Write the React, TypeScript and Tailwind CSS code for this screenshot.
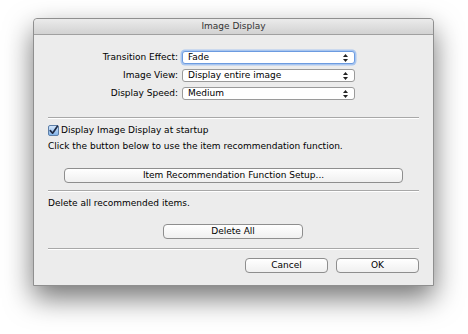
import React from 'react';

const font = { fontFamily: '"DejaVu Sans", "Liberation Sans", sans-serif' };

const Arrows: React.FC = () => (
  <svg width="5" height="8" viewBox="0 0 5 8" className="shrink-0">
    <path d="M2.5 0 L5 3 L0 3 Z" fill="#222" />
    <path d="M2.5 8 L5 5 L0 5 Z" fill="#222" />
  </svg>
);

const Select: React.FC<{ value: string; focused?: boolean }> = ({ value, focused }) => (
  <div
    className={`w-[173px] h-[13px] flex items-center justify-between pl-[5px] pr-[6px] bg-white rounded-[3px] border ${
      focused ? 'border-[#6c9be0] shadow-[0_0_0_1.5px_#a9c6ef]' : 'border-[#9a9a9a]'
    }`}
  >
    <span className="text-[9px] leading-none text-black">{value}</span>
    <Arrows />
  </div>
);

const Button: React.FC<{ label: string; className: string }> = ({ label, className }) => (
  <div
    className={`h-[15px] flex items-center justify-center rounded-[4px] border border-[#8e8e8e] bg-gradient-to-b from-white to-[#f0f0f0] text-[9px] leading-none text-black ${className}`}
  >
    {label}
  </div>
);

const Separator: React.FC<{ className: string }> = ({ className }) => (
  <div className={`h-px bg-[#a8a8a8] border-b border-white box-content ${className}`} />
);

const Checkbox: React.FC = () => (
  <svg width="11" height="11" viewBox="0 0 11 11" className="shrink-0">
    <defs>
      <linearGradient id="cb" x1="0" y1="0" x2="0" y2="1">
        <stop offset="0" stopColor="#d7e8fb" />
        <stop offset="1" stopColor="#7fb2ea" />
      </linearGradient>
    </defs>
    <rect x="0.5" y="0.5" width="10" height="10" rx="1.5" fill="url(#cb)" stroke="#5d7fa8" />
    <path d="M2.3 5.6 L4.6 8.2 L9.4 1.2" fill="none" stroke="#1e2a44" strokeWidth="1.7" strokeLinecap="round" strokeLinejoin="round" />
  </svg>
);

const rows = [
  { label: 'Transition Effect:', value: 'Fade', focused: true },
  { label: 'Image View:', value: 'Display entire image' },
  { label: 'Display Speed:', value: 'Medium' },
];

export default function App() {
  return (
    <div className="w-[468px] h-[334px] bg-white pt-[18px] pl-[33px] overflow-hidden" style={font}>
      <div className="w-[401px] h-[268px] flex flex-col bg-[#ececec] border border-[#8f8f8f] rounded-t-[4px] shadow-[0_12px_28px_rgba(0,0,0,0.55)]">
        {/* Title bar */}
        <div className="h-[16px] shrink-0 flex items-center justify-center rounded-t-[4px] bg-gradient-to-b from-[#ebebeb] to-[#d2d2d2] border-b border-[#a0a0a0] text-[9px] leading-none text-[#333]">
          Image Display
        </div>

        <div className="flex flex-col px-[14px] text-[9px] leading-none text-black">
          {/* Selects */}
          <div className="flex flex-col gap-[5px] pt-[16px]">
            {rows.map(r => (
              <div key={r.label} className="flex items-center h-[13px]">
                <div className="w-[134px] text-right pr-[4px]">{r.label}</div>
                <Select value={r.value} focused={r.focused} />
              </div>
            ))}
          </div>

          <Separator className="mt-[17px]" />

          <div className="flex items-center gap-[2px] mt-[6px] h-[11px]">
            <Checkbox />
            <span>Display Image Display at startup</span>
          </div>
          <div className="mt-[5px] h-[11px] flex items-center">
            Click the button below to use the item recommendation function.
          </div>

          <div className="mt-[16px] flex">
            <Button label="Item Recommendation Function Setup..." className="ml-[16px] w-[339px]" />
          </div>

          <Separator className="mt-[7px]" />

          <div className="mt-[6px] h-[11px] flex items-center">Delete all recommended items.</div>

          <div className="mt-[15px] flex">
            <Button label="Delete All" className="ml-[115px] w-[140px]" />
          </div>

          <Separator className="mt-[9px]" />

          <div className="mt-[8px] flex justify-end gap-[8px]">
            <Button label="Cancel" className="w-[83px]" />
            <Button label="OK" className="w-[83px]" />
          </div>
        </div>
      </div>
    </div>
  );
}
